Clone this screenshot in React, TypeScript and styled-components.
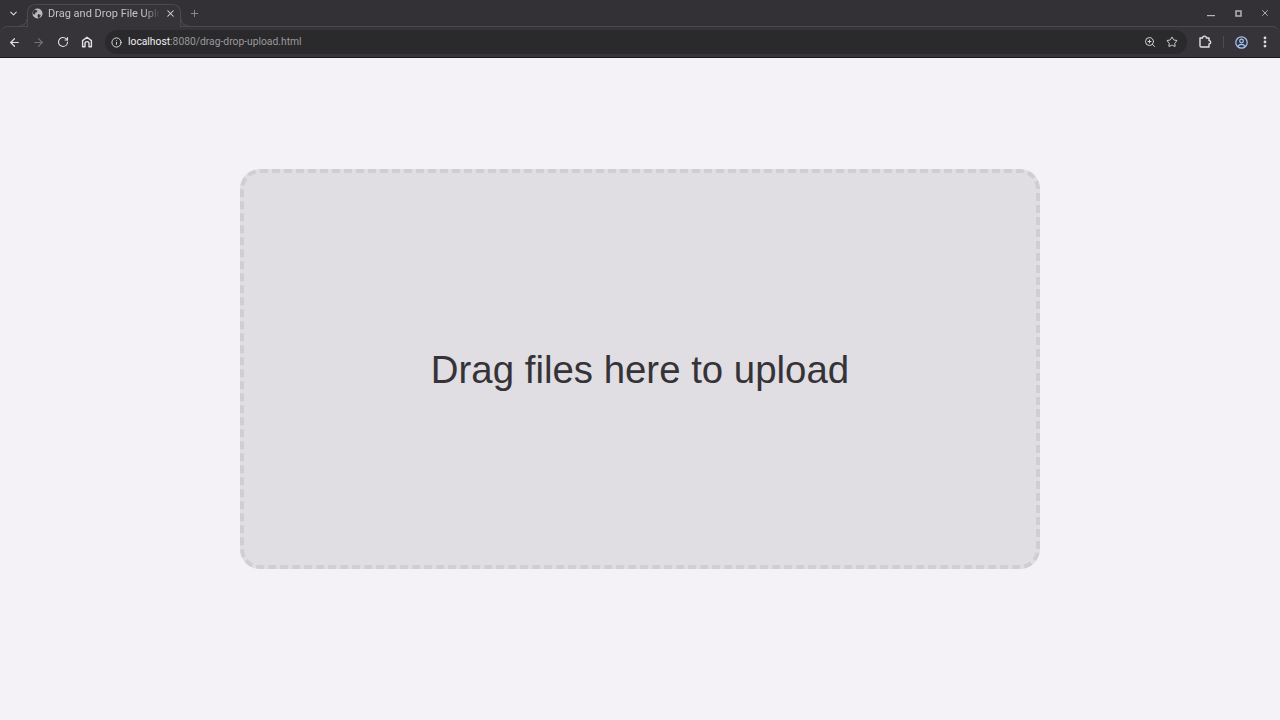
import React from "react";
import styled, { createGlobalStyle } from "styled-components";
import { X, Plus, ChevronDown, ArrowLeft, ArrowRight, RotateCw, Info, ZoomIn, Star, EllipsisVertical } from "lucide-react";

const GlobalStyle = createGlobalStyle`
  html, body {
    margin: 0;
    padding: 0;
    height: 100%;
    background: #f4f2f6;
    font-family: "Liberation Sans", Arial, sans-serif;
  }
`;

const Browser = styled.div`
  width: 1280px;
  height: 720px;
  display: flex;
  flex-direction: column;
  overflow: hidden;
  background: #333135;
`;

const TabStrip = styled.div`
  height: 26px;
  flex: none;
  display: flex;
  align-items: flex-end;
  color: #c8c7cb;
`;

const ListButton = styled.div`
  width: 27px;
  height: 26px;
  display: flex;
  align-items: center;
  justify-content: center;
  color: #d8d7db;
`;

const Tab = styled.div`
  position: relative;
  z-index: 1;
  width: 154px;
  height: 23px;
  box-sizing: border-box;
  margin-bottom: -1px;
  padding: 0 4px 5px 3.5px;
  display: flex;
  align-items: center;
  background: #363438;
  border: 1px solid #4b494d;
  border-bottom: none;
  border-radius: 8px 8px 0 0;

  &::before,
  &::after {
    content: "";
    position: absolute;
    bottom: 1px;
    width: 6px;
    height: 6px;
    border-bottom: 1px solid #4b494d;
  }

  &::before {
    left: -8px;
    border-right: 1px solid #4b494d;
    border-radius: 0 0 6px 0;
  }

  &::after {
    right: -8px;
    border-left: 1px solid #4b494d;
    border-radius: 0 0 0 6px;
  }
`;

const TabTitle = styled.span`
  width: 112px;
  margin-left: 5.5px;
  font: 11px/14px "Roboto", "Noto Sans", sans-serif;
  white-space: nowrap;
  overflow: hidden;
  color: #c4c3c7;
  -webkit-mask-image: linear-gradient(90deg, #000 86%, transparent 100%);
  mask-image: linear-gradient(90deg, #000 86%, transparent 100%);
`;

const TabClose = styled.div`
  margin-left: 4.5px;
  display: flex;
  color: #d8d7db;
`;

const NewTab = styled.div`
  margin-left: 8px;
  height: 25px;
  display: flex;
  align-items: center;
  color: #98979b;
`;

const WindowControls = styled.div`
  margin-left: auto;
  padding-right: 1.5px;
  height: 26px;
  display: flex;
  align-items: center;
  color: #b4b3b7;
`;

const WindowButton = styled.div`
  width: 27px;
  display: flex;
  justify-content: center;
`;

const Toolbar = styled.div`
  height: 30px;
  flex: none;
  display: flex;
  align-items: center;
  padding: 0 3px 0 2.5px;
  background: #363438;
  border-top: 1px solid #4b494d;
  border-bottom: 1px solid #19181b;
  border-radius: 8px 8px 0 0;
`;

const NavButton = styled.div<{ $dim?: boolean }>`
  width: 24px;
  height: 24px;
  flex: none;
  display: flex;
  align-items: center;
  justify-content: center;
  color: ${(p) => (p.$dim ? "#737276" : "#e2e1e5")};
`;

const Omnibox = styled.div`
  width: 1082px;
  height: 24px;
  margin: 0 6px 0 6.5px;
  padding: 0 9px 0 6px;
  box-sizing: border-box;
  flex: none;
  display: flex;
  align-items: center;
  background: #2a292c;
  border-radius: 12px;
`;

const Url = styled.div`
  margin-left: 6px;
  font: 10.3px/14px "Roboto", "Noto Sans", sans-serif;
  color: #9b9a9e;
`;

const Host = styled.span`
  color: #f0eff3;
`;

const OmniActions = styled.div`
  margin-left: auto;
  display: flex;
  align-items: center;
  gap: 10px;
  color: #d4d3d7;
`;

const ToolbarDivider = styled.div`
  width: 1px;
  height: 12px;
  flex: none;
  margin: 0 5px 0 6px;
  background: #4c4b4f;
`;

const Page = styled.main`
  flex: 1;
  display: flex;
  flex-direction: column;
  align-items: center;
  padding-top: 111px;
  background: #f4f2f6;
`;

const DropZone = styled.div`
  width: 800px;
  height: 400px;
  box-sizing: border-box;
  padding-top: 1px;
  display: flex;
  align-items: center;
  justify-content: center;
  background: #e0dee2;
  border: 4px dashed #d0ced2;
  border-radius: 20px;
`;

const DropText = styled.p`
  margin: 0;
  font-size: 38.4px;
  line-height: 44px;
  color: #353337;
`;

const GlobeIcon = () => (
  <svg width="11" height="11" viewBox="0 0 12 12">
    <circle cx="6" cy="6" r="5.5" fill="#b9b8bc" />
    <path d="M3 1.6 6 3 5.4 4.6 3.6 5 3.4 7 1 6.6C.6 4.6 1.6 2.6 3 1.6ZM6.6 6.6 9.6 7.6 8.4 10.4 6.8 11 6 8.6Z" fill="#363438" />
  </svg>
);

const HomeIcon = () => (
  <svg width="12" height="12" viewBox="0 0 12 12" fill="none" stroke="currentColor" strokeWidth="1.4">
    <path d="M1.6 10.8V4.6L6 1.2l4.4 3.4v6.2H8V7.6a2 2 0 0 0-4 0v3.2Z" strokeLinejoin="round" />
  </svg>
);

const ExtensionIcon = () => (
  <svg width="14" height="14" viewBox="0 0 14 14" fill="none" stroke="currentColor" strokeWidth="1.4">
    <path d="M2 3h2.6a1.9 1.9 0 0 1 3.8 0H11v2.6a1.7 1.7 0 0 1 0 3.4V12H3.2A1.2 1.2 0 0 1 2 10.8Z" strokeLinejoin="round" />
  </svg>
);

const ProfileIcon = () => (
  <svg width="13" height="13" viewBox="0 0 13 13" fill="none" stroke="#a8c7fa" strokeWidth="1.2">
    <circle cx="6.5" cy="6.5" r="5.7" />
    <circle cx="6.5" cy="5" r="1.8" />
    <path d="M2.9 10.4c.8-1.4 2-2 3.6-2s2.8.6 3.6 2" />
  </svg>
);

const MinimizeIcon = () => (
  <svg width="8" height="8" viewBox="0 0 8 8" fill="currentColor">
    <rect x="0" y="6" width="8" height="1.2" />
  </svg>
);

const RestoreIcon = () => (
  <svg width="7" height="7" viewBox="0 0 7 7" fill="none" stroke="currentColor" strokeWidth="1.5">
    <rect x="1" y="1" width="5" height="5" />
  </svg>
);

const App: React.FC = () => (
  <Browser>
    <GlobalStyle />
    <TabStrip>
      <ListButton>
        <ChevronDown size={11} strokeWidth={2.4} />
      </ListButton>
      <Tab>
        <GlobeIcon />
        <TabTitle>Drag and Drop File Upload</TabTitle>
        <TabClose>
          <X size={11} strokeWidth={2.2} />
        </TabClose>
      </Tab>
      <NewTab>
        <Plus size={11} strokeWidth={1.8} />
      </NewTab>
      <WindowControls>
        <WindowButton>
          <MinimizeIcon />
        </WindowButton>
        <WindowButton>
          <RestoreIcon />
        </WindowButton>
        <WindowButton>
          <X size={10} strokeWidth={2.2} />
        </WindowButton>
      </WindowControls>
    </TabStrip>
    <Toolbar>
      <NavButton>
        <ArrowLeft size={13} strokeWidth={2.2} />
      </NavButton>
      <NavButton $dim>
        <ArrowRight size={13} strokeWidth={2} />
      </NavButton>
      <NavButton>
        <RotateCw size={12} strokeWidth={2.2} />
      </NavButton>
      <NavButton>
        <HomeIcon />
      </NavButton>
      <Omnibox>
        <Info size={11} strokeWidth={2} color="#e2e1e5" />
        <Url>
          <Host>localhost</Host>:8080/drag-drop-upload.html
        </Url>
        <OmniActions>
          <ZoomIn size={12} strokeWidth={2} />
          <Star size={12} strokeWidth={2} />
        </OmniActions>
      </Omnibox>
      <NavButton>
        <ExtensionIcon />
      </NavButton>
      <ToolbarDivider />
      <NavButton>
        <ProfileIcon />
      </NavButton>
      <NavButton>
        <EllipsisVertical size={14} strokeWidth={2.8} />
      </NavButton>
    </Toolbar>
    <Page>
      <DropZone>
        <DropText>Drag files here to upload</DropText>
      </DropZone>
    </Page>
  </Browser>
);

export default App;
